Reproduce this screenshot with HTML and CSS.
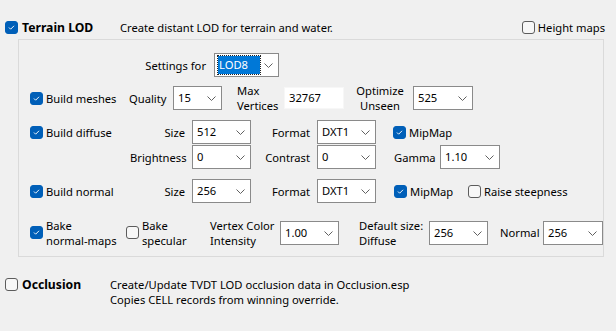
FILE: index.html
```html
<!DOCTYPE html>
<html lang="en">
<head>
  <title>Terrain LOD</title>
  <link rel="stylesheet" href="styles.css">
</head>
<body>
<div class="top">
  <label class="chk head"><span class="box on"><svg viewBox="0 0 13 13"><polyline points="3.5,6.5 5.5,8.5 9.5,4.5"/></svg></span><b>Terrain LOD</b></label>
  <span class="desc">Create distant LOD for terrain and water.</span>
  <label class="chk"><span class="box"></span>Height maps</label>
</div>

<div class="panel">
  <!-- settings for -->
  <div class="row r1">
    <span class="lbl w-settings">Settings for</span>
    <div class="dd w64 ml8"><span class="sel">LOD8</span><svg class="chev" viewBox="0 0 9 5"><polyline points="0.5,0.5 4.5,4.5 8.5,0.5"/></svg></div>
  </div>

  <!-- meshes -->
  <div class="row r2">
    <label class="chk c-meshes"><span class="box on"><svg viewBox="0 0 13 13"><polyline points="3.5,6.5 5.5,8.5 9.5,4.5"/></svg></span>Build meshes</label>
    <span class="lbl w-quality">Quality</span>
    <div class="dd w49"><span>15</span><svg class="chev" viewBox="0 0 9 5"><polyline points="0.5,0.5 4.5,4.5 8.5,0.5"/></svg></div>
    <span class="lbl two w-maxv">Max<br>Vertices</span>
    <div class="txt">32767</div>
    <span class="lbl two center w-opt">Optimize<br>Unseen</span>
    <div class="dd w59"><span>525</span><svg class="chev" viewBox="0 0 9 5"><polyline points="0.5,0.5 4.5,4.5 8.5,0.5"/></svg></div>
  </div>

  <!-- diffuse -->
  <div class="row r3">
    <label class="chk c-wide"><span class="box on"><svg viewBox="0 0 13 13"><polyline points="3.5,6.5 5.5,8.5 9.5,4.5"/></svg></span>Build diffuse</label>
    <span class="lbl right w-size">Size</span>
    <div class="dd w58"><span>512</span><svg class="chev" viewBox="0 0 9 5"><polyline points="0.5,0.5 4.5,4.5 8.5,0.5"/></svg></div>
    <span class="lbl right w-format">Format</span>
    <div class="dd w58"><span>DXT1</span><svg class="chev" viewBox="0 0 9 5"><polyline points="0.5,0.5 4.5,4.5 8.5,0.5"/></svg></div>
    <label class="chk ml17"><span class="box on"><svg viewBox="0 0 13 13"><polyline points="3.5,6.5 5.5,8.5 9.5,4.5"/></svg></span>MipMap</label>
  </div>

  <div class="row r4">
    <span class="spacer"></span>
    <span class="lbl right w-size">Brightness</span>
    <div class="dd w58"><span>0</span><svg class="chev" viewBox="0 0 9 5"><polyline points="0.5,0.5 4.5,4.5 8.5,0.5"/></svg></div>
    <span class="lbl right w-format">Contrast</span>
    <div class="dd w58"><span>0</span><svg class="chev" viewBox="0 0 9 5"><polyline points="0.5,0.5 4.5,4.5 8.5,0.5"/></svg></div>
    <span class="lbl w-gamma">Gamma</span>
    <div class="dd w59"><span>1.10</span><svg class="chev" viewBox="0 0 9 5"><polyline points="0.5,0.5 4.5,4.5 8.5,0.5"/></svg></div>
  </div>

  <!-- normal -->
  <div class="row r5">
    <label class="chk c-wide"><span class="box on"><svg viewBox="0 0 13 13"><polyline points="3.5,6.5 5.5,8.5 9.5,4.5"/></svg></span>Build normal</label>
    <span class="lbl right w-size">Size</span>
    <div class="dd w58"><span>256</span><svg class="chev" viewBox="0 0 9 5"><polyline points="0.5,0.5 4.5,4.5 8.5,0.5"/></svg></div>
    <span class="lbl right w-format">Format</span>
    <div class="dd w58"><span>DXT1</span><svg class="chev" viewBox="0 0 9 5"><polyline points="0.5,0.5 4.5,4.5 8.5,0.5"/></svg></div>
    <label class="chk ml18 w-mip"><span class="box on"><svg viewBox="0 0 13 13"><polyline points="3.5,6.5 5.5,8.5 9.5,4.5"/></svg></span>MipMap</label>
    <label class="chk"><span class="box"></span>Raise steepness</label>
  </div>

  <!-- bake -->
  <div class="row r6">
    <label class="chk c-bake"><span class="box on"><svg viewBox="0 0 13 13"><polyline points="3.5,6.5 5.5,8.5 9.5,4.5"/></svg></span><span class="two">Bake<br>normal-maps</span></label>
    <label class="chk c-spec"><span class="box"></span><span class="two">Bake<br>specular</span></label>
    <span class="lbl two w-vci">Vertex Color<br>Intensity</span>
    <div class="dd w58"><span>1.00</span><svg class="chev" viewBox="0 0 9 5"><polyline points="0.5,0.5 4.5,4.5 8.5,0.5"/></svg></div>
    <span class="lbl two w-def">Default size:<br>Diffuse</span>
    <div class="dd w58"><span>256</span><svg class="chev" viewBox="0 0 9 5"><polyline points="0.5,0.5 4.5,4.5 8.5,0.5"/></svg></div>
    <span class="lbl w-normal">Normal</span>
    <div class="dd w60"><span>256</span><svg class="chev" viewBox="0 0 9 5"><polyline points="0.5,0.5 4.5,4.5 8.5,0.5"/></svg></div>
  </div>
</div>

<div class="occ">
  <label class="chk head"><span class="box"></span><b>Occlusion</b></label>
  <p class="occ-desc">Create/Update TVDT LOD occlusion data in Occlusion.esp<br>Copies CELL records from winning override.</p>
</div>
</body>
</html>
```

FILE: styles.css
```css
body {
  margin: 0;
  background-color: #f0f0f0;
  font-family: "Noto Sans", "Open Sans", sans-serif;
  font-size: 11.2px;
  color: #000;
  width: 616px;
  height: 331px;
  overflow: hidden;
}

b {
  font-weight: bold;
}

/* checkbox */
.chk {
  display: flex;
  align-items: center;
  white-space: nowrap;
}

.box {
  flex: none;
  width: 13px;
  height: 13px;
  box-sizing: border-box;
  border: 1px solid #5c5c5c;
  border-radius: 3px;
  background-color: #f7f7f7;
  margin-right: 3px;
}

.box.on {
  border-color: #005fb8;
  background-color: #005fb8;
}

.box svg {
  display: block;
  width: 11px;
  height: 11px;
  fill: none;
  stroke: #fff;
  stroke-width: 1.1;
  margin: 0;
}

/* top line */
.top {
  display: flex;
  align-items: center;
  height: 14px;
  margin-top: 20px;
  padding-left: 5px;
  padding-right: 11px;
}

.top .head {
  width: 115px;
}

.top .desc {
  flex: 1;
}

.head b {
  font-size: 12.2px;
  margin-left: 1px;
}

/* group panel */
.panel {
  margin: 5px 12px 0 18px;
  height: 218px;
  box-sizing: border-box;
  border: 1px solid #dadada;
  padding-top: 13px;
  padding-left: 11px;
}

.row {
  display: flex;
  align-items: center;
  height: 24px;
}

.r2 { margin-top: 9px; }
.r3 { margin-top: 10px; }
.r4 { margin-top: 1px; }
.r5 { margin-top: 10px; }
.r6 { margin-top: 17px; height: 25px; }

.lbl {
  white-space: nowrap;
  flex: none;
}

.right {
  text-align: right;
  padding-right: 7px;
  box-sizing: border-box;
}

.two {
  line-height: 15px;
}

.center {
  text-align: center;
}

.w-settings { margin-left: 100px; width: 76px; text-align: right; }
.ml8 { margin-left: 8px; }
.ml17 { margin-left: 17px; }
.ml18 { margin-left: 18px; }

.c-meshes { width: 99px; }
.w-quality { width: 44px; }
.w-maxv { width: 47px; margin-left: 15px; }
.w-opt { width: 57px; margin-left: 12px; padding-right: 9px; box-sizing: border-box; }

.c-wide { width: 100px; }
.spacer { width: 100px; flex: none; }
.w-size { width: 62px; }
.w-format { width: 66px; }
.w-gamma { width: 46px; margin-left: 18px; }
.w-mip { width: 74px; }

.c-bake { width: 97px; }
.c-spec { width: 85px; }
.w-vci { width: 70px; }
.w-def { width: 70px; margin-left: 20px; }
.w-normal { width: 43px; margin-left: 12px; }

/* dropdown */
.dd {
  position: relative;
  flex: none;
  height: 24px;
  box-sizing: border-box;
  border: 1px solid #8a8a8a;
  background-color: #fff;
  display: flex;
  align-items: center;
  padding-left: 4px;
}

.dd span {
  line-height: 16px;
}

.dd .chev {
  position: absolute;
  right: 5px;
  top: 9px;
  width: 9px;
  height: 5px;
  fill: none;
  stroke: #606060;
  stroke-width: 1;
}

.w49 { width: 49px; }
.w58 { width: 59px; }
.w59 { width: 60px; }
.w60 { width: 60px; }
.w64 { width: 65px; }

.dd .sel {
  width: 42px;
  box-sizing: border-box;
  background-color: #0078d7;
  color: #fff;
  outline: 1px dotted #222;
  padding: 1px 0 1px 1px;
  margin-left: -1px;
}

.txt {
  flex: none;
  width: 60px;
  height: 22px;
  box-sizing: border-box;
  background-color: #fff;
  border: 1px solid #f7f7f7;
  padding-left: 4px;
  line-height: 20px;
}

/* occlusion */
.occ {
  display: flex;
  align-items: flex-start;
  margin-top: 20px;
  padding-left: 5px;
}

.occ .head {
  width: 105px;
  height: 15px;
}

.occ-desc {
  margin: 0;
  line-height: 15px;
}
```
